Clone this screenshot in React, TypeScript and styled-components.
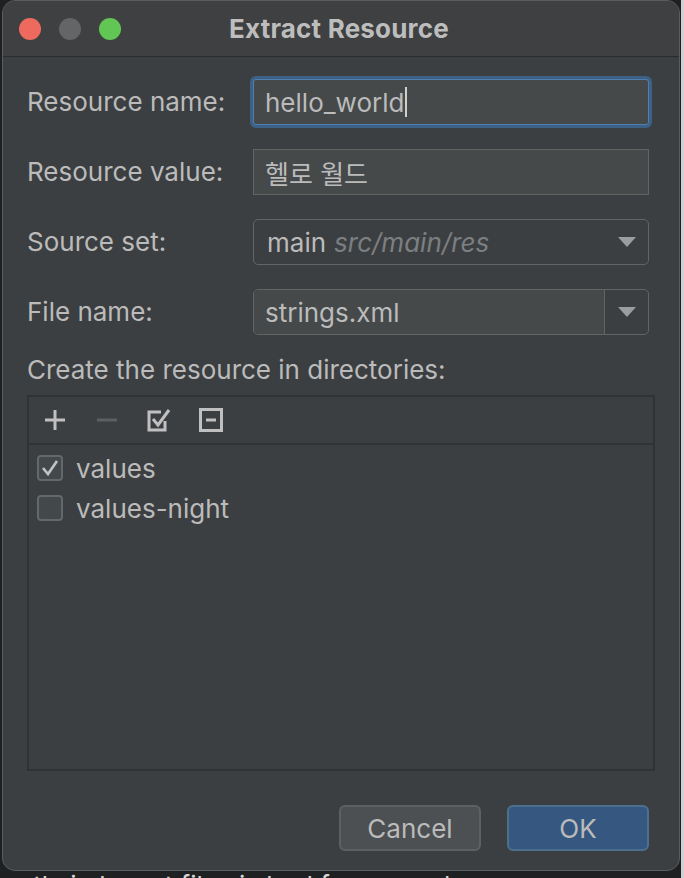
import React from "react";
import styled, { createGlobalStyle } from "styled-components";

const Global = createGlobalStyle`
  html, body { margin: 0; padding: 0; background: #1f2022; overflow: hidden; }
  body { font-family: Inter, "Noto Sans CJK KR", "Liberation Sans", sans-serif; }
`;

const Page = styled.div`
  width: 684px;
  height: 878px;
  overflow: hidden;
  position: relative;
  background: #1f2022;
`;

const RightStrip = styled.div`
  position: absolute;
  top: 0;
  right: 0;
  width: 3px;
  height: 878px;
  background: #cfd0d1;
`;

const Window = styled.div`
  margin-left: 2px;
  width: 678px;
  height: 871px;
  box-sizing: border-box;
  border: 1px solid #5a5c5e;
  border-radius: 13px;
  overflow: hidden;
  background: #3c3f41;
  display: flex;
  flex-direction: column;
  color: #bbbbbb;
`;

const TitleBar = styled.div`
  height: 55px;
  flex: none;
  background: #3e4041;
  border-bottom: 1px solid #2a2b2c;
  display: flex;
  align-items: center;
  position: relative;
  padding-left: 16px;
  gap: 18px;
`;

const Light = styled.span<{ $c: string }>`
  width: 22px;
  height: 22px;
  border-radius: 50%;
  background: ${(p) => p.$c};
`;

const Title = styled.div`
  position: absolute;
  left: 0;
  right: 0;
  top: 0;
  bottom: 0;
  display: flex;
  align-items: center;
  justify-content: center;
  font-weight: bold;
  font-size: 26px;
  letter-spacing: 0.2px;
  color: #bdbdbd;
  padding-right: 4px;
  pointer-events: none;
`;

const Content = styled.div`
  flex: 1;
  display: flex;
  flex-direction: column;
  padding: 22px 30px 20px 24px;
`;

const Form = styled.div`
  display: grid;
  grid-template-columns: 226px 1fr;
  row-gap: 24px;
  align-items: center;
`;

const Label = styled.div`
  font-size: 26px;
  line-height: 30px;
  color: #bbbbbb;
  white-space: nowrap;
`;

const TextField = styled.div<{ $focused?: boolean }>`
  height: 46px;
  box-sizing: border-box;
  border: 1px solid ${(p) => (p.$focused ? "#4f7fb0" : "#646464")};
  background: #45494a;
  display: flex;
  align-items: center;
  padding-left: 11px;
  font-size: 26px;
  color: #bbbbbb;
  border-radius: ${(p) => (p.$focused ? "3px" : "0")};
  box-shadow: ${(p) => (p.$focused ? "0 0 0 3px #3d6185" : "none")};
`;

const Caret = styled.span`
  display: inline-block;
  width: 2px;
  height: 30px;
  background: #cfcfcf;
  margin-left: 1px;
`;

const Combo = styled.div`
  height: 46px;
  box-sizing: border-box;
  border: 1px solid #646464;
  border-radius: 5px;
  background: #3c3f41;
  display: flex;
  align-items: center;
  font-size: 26px;
  overflow: hidden;
`;

const ComboText = styled.div<{ $editable?: boolean }>`
  flex: 1;
  height: 100%;
  display: flex;
  align-items: center;
  padding-left: ${(p) => (p.$editable ? "11px" : "13px")};
  background: ${(p) => (p.$editable ? "#45494a" : "transparent")};
  gap: 8px;
  white-space: nowrap;
`;

const Hint = styled.span`
  font-style: italic;
  color: #7c7f81;
`;

const ArrowBox = styled.div<{ $separated?: boolean }>`
  width: 43px;
  height: 100%;
  flex: none;
  display: flex;
  align-items: center;
  justify-content: center;
  border-left: ${(p) => (p.$separated ? "1px solid #646464" : "none")};
`;

const SectionLabel = styled(Label)`
  margin-top: 20px;
  margin-right: -6px;
`;

const Panel = styled.div`
  margin-top: 10px;
  margin-right: -6px;
  height: 376px;
  box-sizing: border-box;
  border: 2px solid #303234;
  display: flex;
  flex-direction: column;
`;

const Toolbar = styled.div`
  height: 48px;
  flex: none;
  box-sizing: border-box;
  border-bottom: 2px solid #303234;
  display: flex;
  align-items: center;
  padding-left: 14px;
  gap: 28px;
`;

const ToolIcon = styled.svg`
  width: 24px;
  height: 24px;
  display: block;
`;

const List = styled.div`
  padding: 10px 0 0 8px;
  display: flex;
  flex-direction: column;
  gap: 14px;
`;

const Item = styled.div`
  display: flex;
  align-items: center;
  gap: 13px;
  font-size: 26px;
  height: 26px;
  color: #bbbbbb;
`;

const Box = styled.span`
  width: 26px;
  height: 26px;
  box-sizing: border-box;
  border: 2px solid #656869;
  border-radius: 4px;
  background: #43494a;
  display: flex;
  align-items: center;
  justify-content: center;
`;

const Buttons = styled.div`
  margin-top: 34px;
  display: flex;
  justify-content: flex-end;
  gap: 26px;
`;

const Button = styled.button<{ $primary?: boolean }>`
  width: 142px;
  height: 46px;
  box-sizing: border-box;
  border-radius: 6px;
  border: 2px solid ${(p) => (p.$primary ? "#4c708c" : "#5e6060")};
  background: ${(p) => (p.$primary ? "#365880" : "#4c5052")};
  color: #bbbbbb;
  font-family: Inter, "Liberation Sans", sans-serif;
  font-size: 26px;
  padding: 0;
`;

const Behind = styled.div`
  white-space: nowrap;
  font-size: 26px;
  line-height: 26px;
  color: #d6d6d6;
  margin-left: -6px;
  margin-top: 2px;
`;

const Arrow = () => (
  <svg width="18" height="11" viewBox="0 0 18 11">
    <polygon points="0,0 18,0 9,10" fill="#9a9ea1" />
  </svg>
);

export default function App() {
  return (
    <Page>
      <Global />
      <RightStrip />
      <Window>
        <TitleBar>
          <Light $c="#ee6a5f" />
          <Light $c="#636566" />
          <Light $c="#62c655" />
          <Title>Extract Resource</Title>
        </TitleBar>
        <Content>
          <Form>
            <Label>Resource name:</Label>
            <TextField $focused>
              hello_world
              <Caret />
            </TextField>
            <Label>Resource value:</Label>
            <TextField>헬로 월드</TextField>
            <Label>Source set:</Label>
            <Combo>
              <ComboText>
                main <Hint>src/main/res</Hint>
              </ComboText>
              <ArrowBox>
                <Arrow />
              </ArrowBox>
            </Combo>
            <Label>File name:</Label>
            <Combo>
              <ComboText $editable>strings.xml</ComboText>
              <ArrowBox $separated>
                <Arrow />
              </ArrowBox>
            </Combo>
          </Form>
          <SectionLabel>Create the resource in directories:</SectionLabel>
          <Panel>
            <Toolbar>
              <ToolIcon viewBox="0 0 24 24">
                <path d="M12 2v20M2 12h20" stroke="#c0c0c0" strokeWidth="3" fill="none" />
              </ToolIcon>
              <ToolIcon viewBox="0 0 24 24">
                <path d="M2 12h20" stroke="#5c5f61" strokeWidth="3" fill="none" />
              </ToolIcon>
              <ToolIcon viewBox="0 0 24 24">
                <path d="M18 13v9H2V4h12" stroke="#c0c0c0" strokeWidth="3" fill="none" />
                <path d="M6 11l5 6L22 2" stroke="#c0c0c0" strokeWidth="3" fill="none" />
              </ToolIcon>
              <ToolIcon viewBox="0 0 24 24">
                <rect x="1.5" y="1.5" width="21" height="21" stroke="#c0c0c0" strokeWidth="3" fill="none" />
                <path d="M7 12h10" stroke="#c0c0c0" strokeWidth="3" fill="none" />
              </ToolIcon>
            </Toolbar>
            <List>
              <Item>
                <Box>
                  <svg width="18" height="18" viewBox="0 0 18 18">
                    <path d="M2 9l5 6L16 2" stroke="#c2c2c2" strokeWidth="2.6" fill="none" />
                  </svg>
                </Box>
                values
              </Item>
              <Item>
                <Box />
                values-night
              </Item>
            </List>
          </Panel>
          <Buttons>
            <Button>Cancel</Button>
            <Button $primary>OK</Button>
          </Buttons>
        </Content>
      </Window>
      <Behind>rectly in layout files is bad for several reasons:</Behind>
    </Page>
  );
}
